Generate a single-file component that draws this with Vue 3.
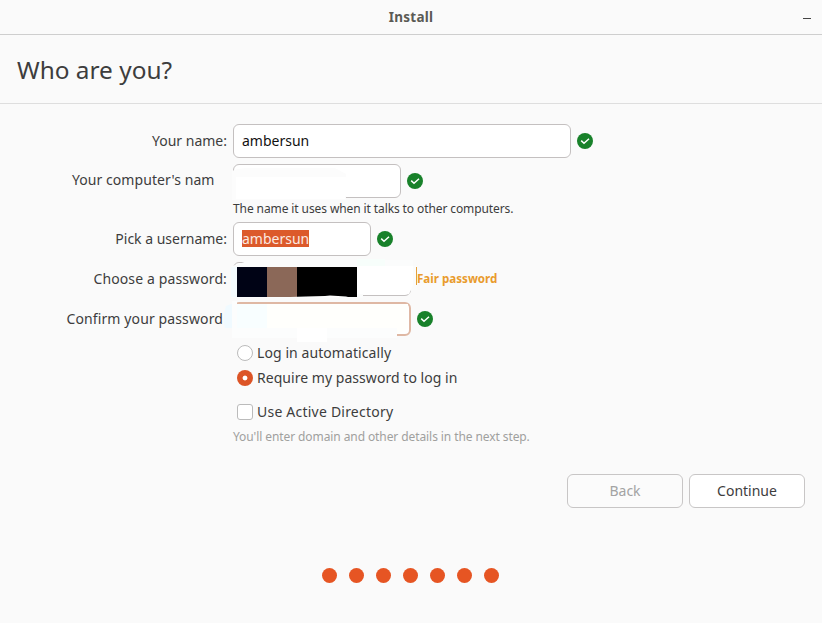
<script setup>
import { h } from 'vue'

const dots = 7

const CheckMark = () =>
  h('svg', { width: 16, height: 16, viewBox: '0 0 16 16' }, [
    h('circle', { cx: 8, cy: 8, r: 8, fill: '#18812a' }),
    h('path', { d: 'M4.2 7.6 7 10.2 12 5.7', fill: 'none', stroke: '#fff', 'stroke-width': 1.5 }),
  ])
</script>

<template>
  <main class="window">
    <header class="titlebar">
      <span class="title">Install</span>
      <i class="minimize"></i>
    </header>
    <section class="heading"><h1>Who are you?</h1></section>

    <form class="form" @submit.prevent>
      <div class="row">
        <label class="label">Your name:</label>
        <div class="field wide"><span class="value">ambersun</span></div>
        <CheckMark />
      </div>

      <div class="row">
        <label class="label short-name">Your computer's nam</label>
        <div class="field medium">
          <svg class="cover" width="190" height="44" viewBox="228 160 190 44">
            <path d="M232 171Q238 168 250 168H335L346 174V200H232Z" fill="#fcfcfc" />
            <path d="M236 177H398V196H345V199H236Z" fill="#fff" />
          </svg>
        </div>
        <CheckMark />
      </div>
      <p class="note">The name it uses when it talks to other computers.</p>

      <div class="row">
        <label class="label">Pick a username:</label>
        <div class="field small"><span class="value selected">ambersun</span></div>
        <CheckMark />
      </div>

      <div class="row">
        <label class="label loose">Choose a password:</label>
        <div class="field password">
          <svg class="cover" width="200" height="44" viewBox="228 258 200 44">
            <path d="M250 260H413V266H417V290H411L408 293L363 294V298H231V266L236 265Z" fill="#fbfcfc" />
            <path d="M231 267H237V297H231Z" fill="#f4fbfe" />
            <path d="M357 259H385V266H357Z" fill="#f7fefb" />
            <path d="M357 266H413V285L409 294H357Z" fill="#fff" />
            <path d="M237 267H267V297H237Z" fill="#000315" />
            <path d="M267 267H297V297H267Z" fill="#8b6858" />
            <path d="M297 267H357V297H297Z" fill="#000" />
            <path d="M290 297 306 296.5 325 296 330 295.5 338 296 346 296.5 348 297Z" fill="#fff" />
          </svg>
        </div>
        <span class="strength">Fair password</span>
      </div>

      <div class="row">
        <label class="label loose short-confirm">Confirm your password</label>
        <div class="field password confirm">
          <svg class="cover" width="200" height="46" viewBox="223 298 200 46">
            <path d="M231 304H237V328H225Q222 318 226 306Z" fill="#f0faff" />
            <path d="M232 301H237V304H397V338H232Z" fill="#fcfdfd" />
            <path d="M237 304H267V328H237Z" fill="#f8feff" />
            <path d="M267 304H408V328L397 334V328H267Z" fill="#fffffc" />
            <path d="M297 328H327V342H297Z" fill="#fff" />
          </svg>
        </div>
        <CheckMark />
      </div>

      <div class="options">
        <label class="option"><i class="radio"></i><span class="auto">Log in automatically</span></label>
        <label class="option"><i class="radio on"></i><span>Require my password to log in</span></label>
        <label class="option directory"><i class="checkbox"></i><span>Use Active Directory</span></label>
        <p class="details">You'll enter domain and other details in the next step.</p>
      </div>
    </form>

    <div class="actions">
      <button class="button back" disabled>Back</button>
      <button class="button">Continue</button>
    </div>

    <div class="dots"><i v-for="n in dots" :key="n" class="dot"></i></div>
  </main>
</template>

<style>
body {
  margin: 0;
  background: #fafafa;
}
</style>

<style scoped>
.window {
  width: 822px;
  height: 623px;
  overflow: hidden;
  background: #fafafa;
  color: #3d3d3d;
  font: 14px/20px "Noto Sans", "Open Sans", sans-serif;
}
.titlebar {
  display: grid;
  grid-template-columns: 1fr auto 1fr;
  align-items: center;
  height: 34px;
  border-bottom: 1px solid #cecece;
}
.title {
  grid-column: 2;
  color: #5a5a55;
  font-weight: 700;
  font-size: 13.5px;
  letter-spacing: 0.25px;
}
.minimize {
  justify-self: end;
  width: 8px;
  height: 1px;
  margin: 3px 11px 0 0;
  background: #444;
}
.heading {
  display: flex;
  align-items: center;
  height: 67px;
  padding: 1px 0 0 17px;
  border-bottom: 1px solid #dedede;
}
h1 {
  margin: 0;
  font-size: 24.4px;
  font-weight: 400;
  line-height: 32px;
}
.form {
  display: flex;
  flex-direction: column;
  gap: 6px;
  padding-top: 20px;
}
.row {
  display: flex;
  align-items: center;
  gap: 6px;
  height: 34px;
}
.label {
  box-sizing: border-box;
  width: 227px;
  text-align: right;
  white-space: nowrap;
}
.loose {
  letter-spacing: 0.12px;
}
.short-name {
  padding: 0 12.5px 2px 0;
  letter-spacing: 0.07px;
}
.short-confirm {
  padding-right: 4px;
}
.field {
  position: relative;
  display: flex;
  align-items: center;
  box-sizing: border-box;
  height: 34px;
  padding-left: 7px;
  border: 1px solid #c4c0c0;
  border-radius: 6px;
  background: #fff;
}
.wide { width: 338px; }
.medium { width: 168px; }
.small { width: 138px; }
.password { width: 178px; }
.confirm {
  border: 2px solid #dfb8a4;
}
.value {
  padding: 0 1px 2px;
  color: #111;
  line-height: 17px;
}
.selected {
  padding: 0;
  margin: 0 0 2px 1px;
  background: #dc5a2b;
  color: #fbe9e0;
}
.cover {
  position: absolute;
  left: -6px;
  top: -5px;
}
.confirm .cover {
  left: -12px;
  top: -6px;
}
.note {
  margin: -3px 0 -1px;
  padding-left: 233px;
  font-size: 12px;
  letter-spacing: -0.1px;
  line-height: 16px;
}
.strength {
  position: relative;
  z-index: 1;
  height: 18px;
  line-height: 24px;
  margin: -6px 0 0 -1px;
  border-left: 1px solid #e5a03c;
  color: #e99b2c;
  font-size: 11.6px;
  font-weight: 700;
}
.options {
  display: flex;
  flex-direction: column;
  margin-top: -2px;
  padding-left: 237px;
}
.option {
  display: flex;
  align-items: center;
  gap: 4px;
  height: 25px;
}
.option span {
  letter-spacing: 0.04px;
}
.option .auto {
  letter-spacing: 0.08px;
}
.directory {
  margin-top: 9px;
}
.directory span {
  letter-spacing: 0.22px;
}
.radio,
.checkbox {
  box-sizing: border-box;
  width: 16px;
  height: 16px;
  border: 1px solid #bbb;
  border-radius: 50%;
  background: #fff;
}
.radio.on {
  border: none;
  background: radial-gradient(circle, #fff 2px, #dc5426 2.8px);
}
.checkbox {
  border-radius: 3px;
}
.details {
  margin: 5px 0 -1px -4px;
  color: #a0a09e;
  font-size: 12px;
  letter-spacing: -0.09px;
  line-height: 16px;
}
.actions {
  display: flex;
  justify-content: flex-end;
  gap: 6px;
  padding: 30px 17px 0 0;
}
.button {
  width: 116px;
  height: 34px;
  padding: 0;
  border: 1px solid #c8c6c6;
  border-radius: 6px;
  background: #fff;
  color: #3d3d3d;
  font: inherit;
}
.back {
  background: #fbfbfb;
  color: #a3a3a3;
}
.dots {
  display: flex;
  justify-content: center;
  gap: 12px;
  padding: 60px 1px 0 0;
}
.dot {
  width: 15px;
  height: 15px;
  border-radius: 50%;
  background: #e65523;
}
</style>
